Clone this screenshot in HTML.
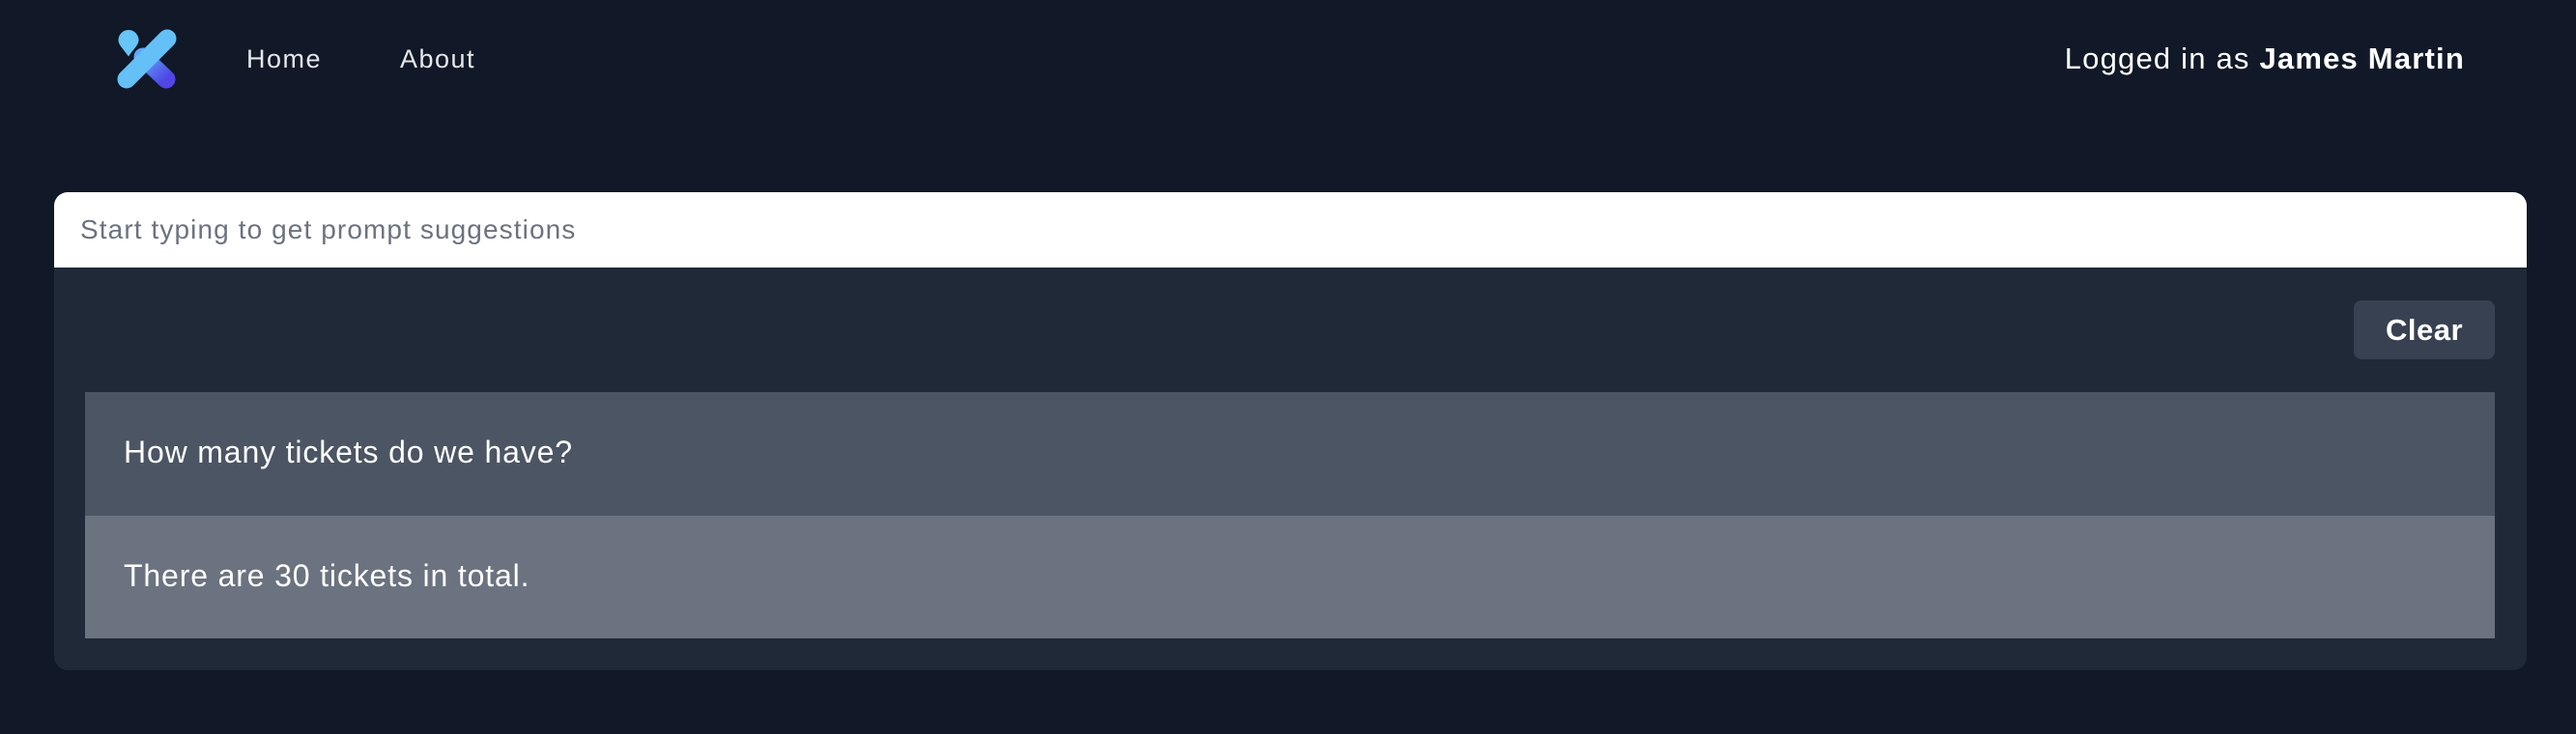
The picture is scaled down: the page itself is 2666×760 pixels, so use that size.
<!DOCTYPE html>
<html><head><meta charset="utf-8"><style>
*{margin:0;padding:0;box-sizing:border-box}
body{width:2666px;height:760px;background:#111827;font-family:"Liberation Sans",sans-serif;position:relative;overflow:hidden}
.a{position:absolute;white-space:nowrap}
</style></head><body>
<svg class="a" style="left:121px;top:30px" width="62" height="62" viewBox="-1 -1 62 62">
<defs><linearGradient id="g" x1="0" y1="0" x2="1" y2="1"><stop offset="0" stop-color="#60a5fa"/><stop offset="1" stop-color="#4f46e5"/></linearGradient></defs>
<line x1="26" y1="28" x2="50" y2="51" stroke="url(#g)" stroke-width="19" stroke-linecap="round"/>
<path d="M11 0a10.5 10.5 0 0 1 10.5 10.5c0 5-5 9-10.5 17c-5.5-8-10.5-12-10.5-17A10.5 10.5 0 0 1 11 0z" fill="#67c5f7"/>
<line x1="9" y1="51" x2="51" y2="9" stroke="#65c0f8" stroke-width="19" stroke-linecap="round"/>
</svg>
<div class="a" style="left:255px;top:46px;font-size:27px;letter-spacing:1.5px;color:#e5e7eb">Home</div>
<div class="a" style="left:414px;top:46px;font-size:27px;letter-spacing:1.5px;color:#e5e7eb">About</div>
<div class="a" style="right:115px;top:43px;font-size:31px;letter-spacing:1.2px;color:#fff">Logged in as <b>James Martin</b></div>
<div class="a" style="left:56px;top:199px;width:2559px;height:495px;background:#1f2937;border-radius:14px;overflow:hidden">
 <div style="height:78px;background:#fff;padding:23px 0 0 27px;font-size:28px;letter-spacing:1.1px;color:#6b7280">Start typing to get prompt suggestions</div>
 <div class="a" style="left:2380px;top:112px;width:146px;height:61px;background:#374151;border-radius:8px;color:#fff;font-weight:bold;font-size:31px;letter-spacing:0.5px;text-align:center;line-height:61px">Clear</div>
 <div class="a" style="left:32px;top:207px;width:2494px;height:128px;background:#4b5563;color:#fff;font-size:32px;letter-spacing:0.85px;padding:44px 0 0 40px">How many tickets do we have?</div>
 <div class="a" style="left:32px;top:335px;width:2494px;height:127px;background:#6b7280;color:#fff;font-size:32px;letter-spacing:0.85px;padding:44px 0 0 40px">There are 30 tickets in total.</div>
</div>
</body></html>
